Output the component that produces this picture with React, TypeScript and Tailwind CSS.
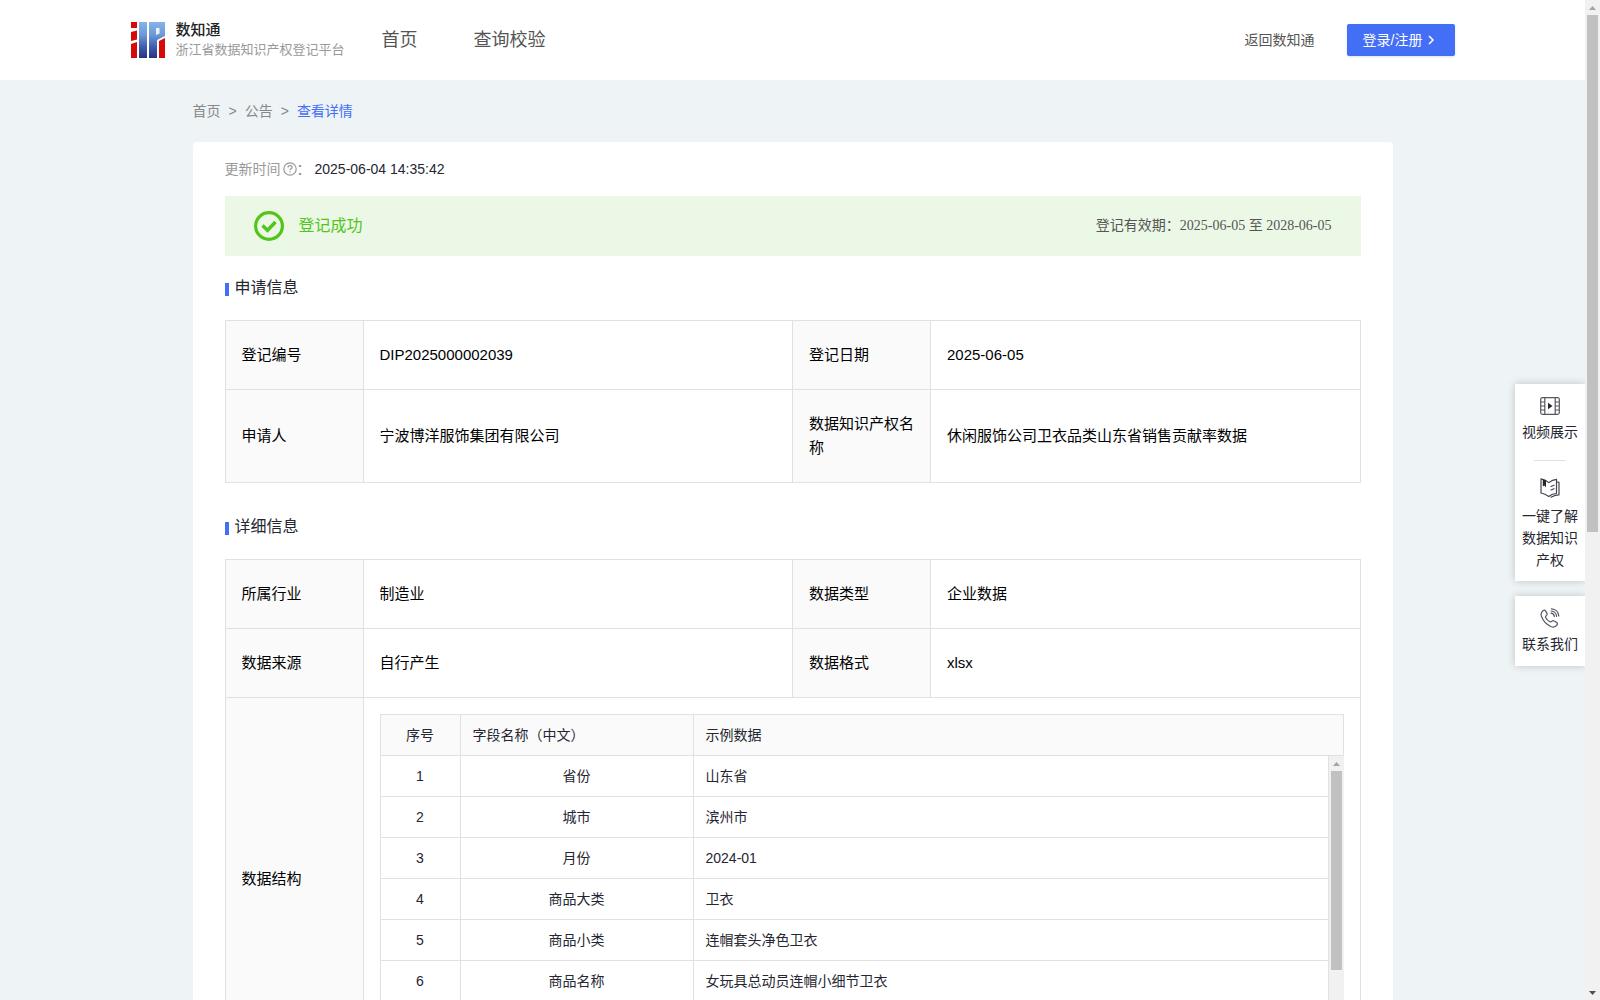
import React from "react";

const sampleRows = [
  ["省份", "山东省"],
  ["城市", "滨州市"],
  ["月份", "2024-01"],
  ["商品大类", "卫衣"],
  ["商品小类", "连帽套头净色卫衣"],
  ["商品名称", "女玩具总动员连帽小细节卫衣"],
];

function Logo() {
  return (
    <svg width="34" height="36" viewBox="0 0 34 36" aria-hidden="true">
      <defs>
        <linearGradient id="blue" gradientUnits="userSpaceOnUse" x1="0" y1="0" x2="0" y2="36">
          <stop offset="0" stopColor="#84b4e8" />
          <stop offset="0.35" stopColor="#6c9ada" />
          <stop offset="0.7" stopColor="#3d5cae" />
          <stop offset="1" stopColor="#28337f" />
        </linearGradient>
      </defs>
      <path fill="#d60a0a" d="M0 0h6v6H0zM0 10l6-1.500v9L0 19zM0 22l6-2v16H0z" />
      <path fill="url(#blue)" d="M8 0h8v36H8zM18 0h16v14l-8 4v18h-8z" />
      <path fill="#ffffff" fillOpacity="0.850" d="M25 6h3.500v5.500L25 13z" />
      <path fill="#d60a0a" d="M28 19l6-3v20h-6z" />
    </svg>
  );
}

function Arrow({ down = false, dark = false }: { down?: boolean; dark?: boolean }) {
  return (
    <svg width="15" height="15" viewBox="0 0 15 15" className="shrink-0" aria-hidden="true">
      <path d={down ? "M4 6h7l-3.500 4z" : "M4 10h7L7.500 6z"} fill={dark ? "#505050" : "#a3a3a3"} />
    </svg>
  );
}

function ScrollBar({ thumb, dark }: { thumb: string; dark?: boolean }) {
  return (
    <div className="flex w-[15px] shrink-0 flex-col items-center bg-[#f1f1f1]">
      <Arrow />
      <div className="min-h-0 w-full flex-1 px-0.5">
        <div className={"bg-[#c1c1c1] " + thumb} />
      </div>
      <Arrow down dark={dark} />
    </div>
  );
}

function SectionTitle({ children }: { children: React.ReactNode }) {
  return (
    <h2 className="flex h-6 items-center gap-1.5 text-base text-[#252631]">
      <span className="mt-0.5 h-[13px] w-1 bg-[#436ef6]" />
      {children}
    </h2>
  );
}

function Label({ children }: { children: React.ReactNode }) {
  return (
    <th scope="row" className="border border-[#e1e1e1] bg-[#fafafa] px-4 py-[22px] text-left font-normal">
      {children}
    </th>
  );
}

function Value({ children }: { children: React.ReactNode }) {
  return <td className="border border-[#e1e1e1] px-4 py-[22px]">{children}</td>;
}

function InfoTable({ children }: { children: React.ReactNode }) {
  return (
    <table className="w-full table-fixed border-collapse text-[15px] leading-6 text-black">
      <colgroup>
        <col className="w-[138px]" />
        <col />
        <col className="w-[138px]" />
        <col />
      </colgroup>
      <tbody>{children}</tbody>
    </table>
  );
}

function VideoIcon() {
  return (
    <svg width="20" height="18" viewBox="0 0 20 18" fill="none" stroke="#55565f" strokeWidth="1.200" aria-hidden="true">
      <rect x="0.700" y="0.700" width="18.600" height="16.600" rx="1.800" />
      <path d="M4.800 1v16M15.200 1v16M1 5h3.500M1 9h3.500M1 13h3.500M15.500 5H19M15.500 9H19M15.500 13H19" />
      <path d="M8 5.800v6.400L12.500 9z" fill="#252631" stroke="none" />
    </svg>
  );
}

function BookIcon() {
  return (
    <svg width="20" height="20" viewBox="0 0 20 20" fill="none" stroke="#45464f" strokeWidth="1.200" strokeLinejoin="round" strokeLinecap="round" aria-hidden="true">
      <path d="M1 .800C4 1.300 7 2.800 8.800 4.600 11 2.800 13.500 1.600 16.500 1.300V15.500c-3 0-5.500 1-7.700 3C6.500 16.800 4 15.500 1 15z" />
      <path d="M17 4l2 .300v12.500c-3 0-5.500 1-8 2.400" />
      <path d="M11 8.500l3-1.300M11 12l3-1.300" />
      <path d="M2.800 1.200L6 2.500V9.500L4.400 7.500 2.800 8.500z" fill="#252631" stroke="none" />
    </svg>
  );
}

function PhoneIcon() {
  return (
    <svg width="20" height="20" viewBox="0 0 20 20" fill="none" stroke="#55565f" strokeWidth="1.200" strokeLinecap="round" strokeLinejoin="round" aria-hidden="true">
      <path d="M3.200 2.600C1 4.200.6 6.200 1.600 8.800c1.700 4.400 5 7.800 9.200 9.700 2.600 1.100 4.800.4 6.200-1.600.7-1 .5-1.700-.3-2.300l-2.500-1.700c-.8-.6-1.500-.5-2.200.2-.9 1-1.500 1.100-2.500.5-1.700-1-2.900-2.300-3.700-3.900-.5-1-.3-1.600.6-2.300.9-.7 1-1.400.5-2.300L5.500 2.900c-.5-.9-1.400-1-2.300-.3z" />
      <path d="M11 5.200c1.800.2 3 1.500 3.400 3.300M11.200 3c3 .2 5 2.300 5.400 5.400M11.500.8c4 .2 7 3.200 7.300 7.200" />
    </svg>
  );
}

const head = "border-r border-b border-[#e1e1e1] px-3 font-normal";

export default function App() {
  return (
    <div className="flex h-screen overflow-hidden bg-[#eef3f6] font-['Liberation_Sans','Noto_Sans_CJK_SC',sans-serif] text-sm text-[#252631]">
      <div className="relative min-w-0 flex-1 overflow-hidden">
        <header className="bg-white">
          <div className="mx-auto flex h-20 max-w-[1324px] items-center">
            <a href="#home" className="flex items-center gap-[11px]">
              <Logo />
              <span className="flex flex-col">
                <strong className="text-[15px] leading-5 font-medium text-[#222222]">数知通</strong>
                <span className="text-[13px] leading-5 text-[#999999]">浙江省数据知识产权登记平台</span>
              </span>
            </a>
            <nav className="ml-[37px] flex gap-14 text-lg text-[#555555]">
              <a href="#index">首页</a>
              <a href="#query">查询校验</a>
            </nav>
            <a href="#back" className="ml-auto text-[#555555]">返回数知通</a>
            <button className="ml-8 flex h-8 w-[108px] items-center gap-1 rounded-xs bg-[#436ef6] pl-4 text-white shadow-sm">
              登录/注册
              <svg width="10" height="10" viewBox="0 0 10 10" fill="none" stroke="currentColor" strokeWidth="1.500" aria-hidden="true">
                <path d="M3 1l4 4-4 4" />
              </svg>
            </button>
          </div>
        </header>

        <main className="mx-auto max-w-[1200px]">
          <nav aria-label="面包屑" className="flex h-[62px] items-center gap-2 text-[#888888]">
            <a href="#index">首页</a>
            <span>&gt;</span>
            <a href="#notice">公告</a>
            <span>&gt;</span>
            <a href="#detail" className="text-[#436ef6]">查看详情</a>
          </nav>

          <section className="rounded bg-white px-8 pt-4 pb-8">
            <div className="flex h-[22px] items-center">
              <span className="text-[#999999]">更新时间</span>
              <svg width="14" height="14" viewBox="0 0 14 14" fill="none" stroke="#999999" strokeWidth="1.200" className="ml-0.5" aria-hidden="true">
                <circle cx="7" cy="7" r="6.200" />
                <path d="M5 5.600C5 4.400 5.900 3.700 7 3.700s2 .7 2 1.700c0 1.300-2 1.400-2 2.900M7 9.300v1.200" />
              </svg>
              <span className="text-[#888888]">：</span>
              <time className="ml-1">2025-06-04 14:35:42</time>
            </div>

            <div className="mt-4 flex h-15 items-center bg-[#ebf8e6] px-[29px]">
              <svg width="30" height="30" viewBox="0 0 30 30" fill="none" stroke="#52c41a" aria-hidden="true">
                <circle cx="15" cy="15" r="13.400" strokeWidth="3.200" />
                <path d="M8.500 14.500l5 4.800 8-8.300" strokeWidth="3.400" />
              </svg>
              <span className="ml-[15px] text-base text-[#52c41a]">登记成功</span>
              <span className="ml-auto font-['Liberation_Serif','Noto_Sans_CJK_SC',serif] text-[#555555]">
                登记有效期：2025-06-05 至 2028-06-05
              </span>
            </div>

            <div className="my-5">
              <SectionTitle>申请信息</SectionTitle>
            </div>
            <InfoTable>
              <tr>
                <Label>登记编号</Label>
                <Value>DIP2025000002039</Value>
                <Label>登记日期</Label>
                <Value>2025-06-05</Value>
              </tr>
              <tr>
                <Label>申请人</Label>
                <Value>宁波博洋服饰集团有限公司</Value>
                <Label>数据知识产权名称</Label>
                <Value>休闲服饰公司卫衣品类山东省销售贡献率数据</Value>
              </tr>
            </InfoTable>

            <div className="mt-8 mb-5">
              <SectionTitle>详细信息</SectionTitle>
            </div>
            <InfoTable>
              <tr>
                <Label>所属行业</Label>
                <Value>制造业</Value>
                <Label>数据类型</Label>
                <Value>企业数据</Value>
              </tr>
              <tr>
                <Label>数据来源</Label>
                <Value>自行产生</Value>
                <Label>数据格式</Label>
                <Value>xlsx</Value>
              </tr>
              <tr>
                <Label>数据结构</Label>
                <td colSpan={3} className="border border-[#e1e1e1] p-4">
                  <div className="border-t border-l border-[#e1e1e1] text-sm text-[#252631]">
                    <table className="w-full table-fixed border-separate border-spacing-0 bg-[#fafafa]">
                      <thead>
                        <tr className="h-[41px]">
                          <th className={head + " w-20"}>序号</th>
                          <th className={head + " w-[233px] text-left"}>字段名称（中文）</th>
                          <th className={head + " text-left"}>示例数据</th>
                        </tr>
                      </thead>
                    </table>
                    <div className="flex h-[288px] overflow-hidden">
                      <div className="min-w-0 flex-1">
                        <table className="w-full table-fixed border-separate border-spacing-0">
                          <tbody>
                            {sampleRows.map(([name, value], i) => (
                              <tr key={name} className="h-[41px]">
                                <td className={head + " w-20 text-center"}>{i + 1}</td>
                                <td className={head + " w-[233px] text-center"}>{name}</td>
                                <td className={head}>{value}</td>
                              </tr>
                            ))}
                          </tbody>
                        </table>
                      </div>
                      <ScrollBar thumb="h-[199px]" />
                    </div>
                  </div>
                </td>
              </tr>
            </InfoTable>
          </section>
        </main>

        <aside className="absolute top-96 right-0 flex w-[70px] flex-col gap-[15px] text-center leading-[22px]">
          <div className="flex flex-col items-center bg-white px-1.5 pt-[13px] pb-[10px] shadow-[0_0_8px_rgba(0,0,0,0.2)]">
            <a href="#video" className="flex flex-col items-center gap-[6px]">
              <VideoIcon />
              视频展示
            </a>
            <hr className="mt-[17px] mb-[17px] w-8 border-[#e1e1e1]" />
            <a href="#learn" className="flex flex-col items-center gap-[7px]">
              <BookIcon />
              <span>一键了解数据知识产权</span>
            </a>
          </div>
          <a href="#contact" className="flex flex-col items-center gap-[5px] bg-white pt-3 pb-[11px] shadow-[0_0_8px_rgba(0,0,0,0.2)]">
            <PhoneIcon />
            联系我们
          </a>
        </aside>
      </div>
      <ScrollBar thumb="h-[53.3%]" dark />
    </div>
  );
}
